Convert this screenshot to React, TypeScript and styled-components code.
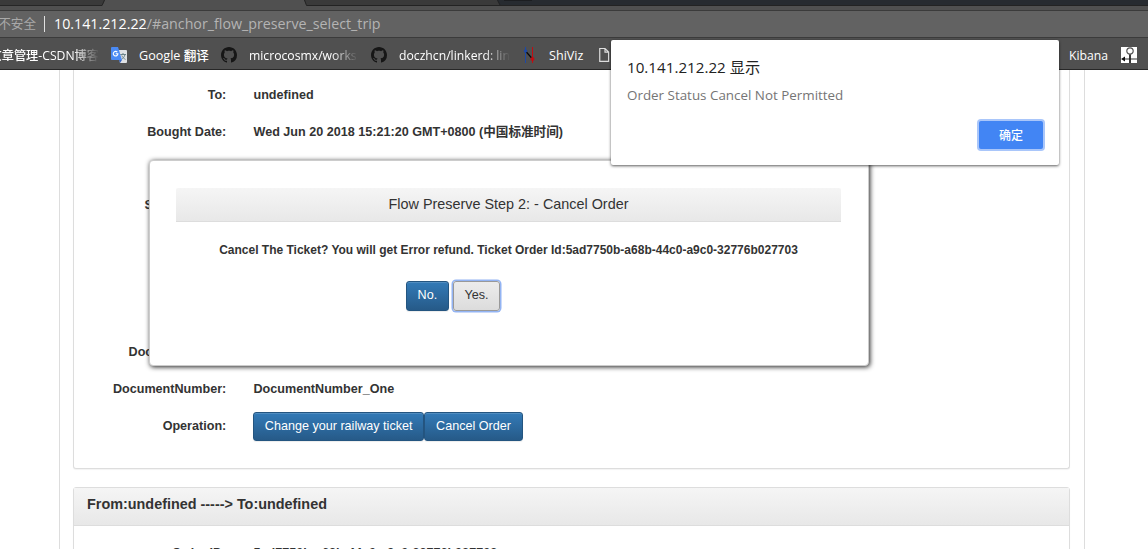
import React from 'react';
import styled, { createGlobalStyle } from 'styled-components';

const uiFont = '"Open Sans", "Noto Sans CJK SC", sans-serif';
const pageFont = '"Liberation Sans", "Noto Sans CJK SC", sans-serif';

const GlobalStyle = createGlobalStyle`
  *, *::before, *::after { box-sizing: border-box; }
  html, body { margin: 0; padding: 0; }
  body { background: #fff; overflow: hidden; }
`;

const Window = styled.div`
  position: relative;
  display: flex;
  flex-direction: column;
  width: 1148px;
  height: 549px;
  overflow: hidden;
  background: #fff;
`;

/* Browser chrome */

const Chrome = styled.header`
  flex: none;
  height: 70px;
  display: flex;
  flex-direction: column;
  background: #505050;
  border-bottom: 1px solid #272727;
`;

const TabStrip = styled.svg`
  display: block;
  flex: none;
  width: 1148px;
  height: 10px;
`;

const AddressBar = styled.div`
  flex: none;
  height: 28px;
  display: flex;
  align-items: center;
  background: #626262;
  border-top: 1px solid #3b3b3b;
  border-bottom: 1px solid #3b3b3b;
  font: 14.25px/20px ${uiFont};
  color: #b4b4b4;
  white-space: nowrap;
`;

const Security = styled.span`
  width: 36px;
  display: flex;
  justify-content: flex-end;
  font-size: 12.6px;
  color: #a9a9a9;
`;

const Separator = styled.span`
  width: 1px;
  height: 16px;
  margin: 0 9px 0 8px;
  background: #e0e0e0;
`;

const Host = styled.span`
  color: #fff;
`;

const Bookmarks = styled.nav`
  flex: 1;
  display: flex;
  align-items: center;
  padding-top: 3px;
  font: 500 12.2px/18px ${uiFont};
  color: #fff;
  white-space: nowrap;
`;

const Bookmark = styled.div<{ $gap?: number; $width: number }>`
  flex: none;
  display: flex;
  align-items: center;
  width: ${p => p.$width}px;
  margin-left: ${p => p.$gap ?? 0}px;
  gap: 12px;
`;

const BookmarkLabel = styled.span<{ $fade?: boolean; $size?: number; $end?: boolean }>`
  flex: 1;
  min-width: 0;
  display: flex;
  justify-content: ${p => (p.$end ? 'flex-end' : 'flex-start')};
  overflow: hidden;
  padding-top: 1px;
  font-size: ${p => p.$size ?? 12.2}px;
  ${p => p.$fade && 'mask-image: linear-gradient(to left, transparent 0, #000 26px);'}
`;

const Icon = styled.svg`
  display: block;
  flex: none;
`;

/* Page */

const Page = styled.main`
  flex: 1;
  min-height: 0;
  width: 1026px;
  margin-left: 59px;
  padding: 0 14px 0 13px;
  border: 1px solid #ddd;
  border-width: 0 1px;
  overflow: hidden;
  color: #333;
  font: 14.4px/22px ${pageFont};
`;

const OrderPanel = styled.section<{ $continued?: boolean }>`
  border: 1px solid #ddd;
  background: #fff;
  box-shadow: 0 1px 1px rgba(0, 0, 0, 0.05);
  ${p =>
    p.$continued
      ? 'height: 399px; border-top: 0; border-radius: 0 0 3px 3px; padding-top: 6.4px;'
      : 'height: 120px; margin-top: 18px; border-radius: 3px 3px 0 0;'}
`;

const PanelTitle = styled.h3`
  margin: 0 0 9px;
  height: 38px;
  padding: 5px 13px;
  font-size: 14.4px;
  line-height: 22px;
  font-weight: bold;
  background: linear-gradient(#f5f5f5, #e8e8e8);
  border-bottom: 1px solid #ddd;
`;

const Field = styled.div`
  display: flex;
  align-items: center;
  height: 36.8px;
  font-size: 12.6px;
  font-weight: bold;
  white-space: nowrap;
`;

const FieldLabel = styled.span`
  width: 152.3px;
  text-align: right;
`;

const FieldValue = styled.div<{ $actions?: boolean }>`
  display: flex;
  margin-left: ${p => (p.$actions ? 26.7 : 27.2)}px;
  padding-top: ${p => (p.$actions ? 1.2 : 0)}px;
`;

const Button = styled.button<{ $plain?: boolean }>`
  height: ${p => (p.$plain ? 30 : 29)}px;
  padding: 0 10.8px 2px;
  border: 1px solid ${p => (p.$plain ? '#999' : '#245580')};
  border-radius: 3px;
  background: ${p =>
    p.$plain ? 'linear-gradient(#ececec, #dcdcdc)' : 'linear-gradient(#337ab7, #265a88)'};
  box-shadow: ${p =>
    p.$plain ? '0 0 0 1.5px #93b4f3' : 'inset 0 1px 0 rgba(255,255,255,.15), 0 1px 1px rgba(0,0,0,.075)'};
  color: ${p => (p.$plain ? '#333' : '#fff')};
  font: 12.6px/20px ${pageFont};
`;

/* In-page modal */

const Modal = styled.section`
  position: absolute;
  left: 149px;
  top: 160px;
  width: 720px;
  height: 206px;
  padding: 27px 27px 0 26px;
  border: 1px solid #ccc;
  border-radius: 4px;
  background: #fff;
  box-shadow: 1px 1px 5px #222;
  color: #333;
  font-family: ${pageFont};
`;

const ModalTitle = styled.h2`
  margin: 0;
  height: 34px;
  border-bottom: 1px solid #ddd;
  border-radius: 2px 2px 0 0;
  background: linear-gradient(#f5f5f5, #e8e8e8);
  font-size: 14.4px;
  line-height: 33px;
  font-weight: normal;
  text-align: center;
`;

const ModalText = styled.p`
  margin: 18px 0 0;
  font-size: 12px;
  line-height: 20px;
  font-weight: bold;
  text-align: center;
  white-space: nowrap;
`;

const ModalActions = styled.div`
  display: flex;
  align-items: flex-start;
  gap: 4px;
  margin: 21px 0 0 230px;

  ${Button} {
    padding: 0 10.6px 3px;
    height: 30px;
  }
`;

/* Native alert */

const Alert = styled.section`
  position: absolute;
  left: 611px;
  top: 40px;
  width: 448px;
  height: 125px;
  padding: 16px 16px 0;
  border-radius: 2px;
  background: #fff;
  box-shadow: 0 1px 3px rgba(0, 0, 0, 0.65);
  display: flex;
  flex-direction: column;
  font-family: ${uiFont};
`;

const AlertTitle = styled.h1`
  margin: 0;
  font-size: 15.2px;
  line-height: 22px;
  font-weight: normal;
  color: #222;
`;

const AlertText = styled.p`
  margin: 7px 0 0;
  font-size: 13.4px;
  line-height: 20px;
  color: #757575;
`;

const AlertButton = styled.button`
  align-self: flex-end;
  width: 64px;
  height: 28px;
  margin-top: 16px;
  padding: 1px 0 0;
  border: 0;
  border-radius: 2px;
  background: #4285f4;
  box-shadow: 0 0 0 2px #a9c6fa;
  color: #fff;
  font: 500 12px/27px ${uiFont};
`;

const TabShapes = () => (
  <TabStrip viewBox="0 0 1148 10">
    <path d="M0 0H105L102.5 5.5H0Z" fill="#3a3a3a" />
    <path d="M0 5.5H102L104.5 0" fill="none" stroke="#262626" />
    <path d="M304 0H1148V5.5H306.5Z" fill="#3a3a3a" />
    <path d="M497 0H1148V5.5H500Z" fill="#272b30" />
    <path d="M304.500 0L306.500 5.500H1148M497.500 0L500 5" fill="none" stroke="#232323" />
    <path d="M504 0H532" stroke="#1c1e21" strokeWidth="2" />
  </TabStrip>
);

const GithubIcon = () => (
  <Icon width="16" height="16" viewBox="0 0 16 16">
    <path
      fill="#161616"
      d="M8 0C3.58 0 0 3.58 0 8c0 3.54 2.29 6.53 5.47 7.59.4.07.55-.17.55-.38 0-.19-.01-.82-.01-1.49-2.01.37-2.53-.49-2.69-.94-.09-.23-.48-.94-.82-1.13-.28-.15-.68-.52-.01-.53.63-.01 1.08.58 1.23.82.72 1.21 1.87.87 2.33.66.07-.52.28-.87.51-1.07-1.78-.2-3.64-.89-3.64-3.95 0-.87.31-1.59.82-2.15-.08-.2-.36-1.02.08-2.12 0 0 .67-.21 2.2.82.64-.18 1.32-.27 2-.27s1.36.09 2 .27c1.53-1.04 2.2-.82 2.2-.82.44 1.1.16 1.92.08 2.12.51.56.82 1.27.82 2.15 0 3.07-1.87 3.75-3.65 3.95.29.25.54.73.54 1.48 0 1.07-.01 1.93-.01 2.2 0 .21.15.46.55.38A8.01 8.01 0 0 0 16 8c0-4.42-3.58-8-8-8Z"
    />
  </Icon>
);

const TranslateIcon = () => (
  <Icon width="16" height="16" viewBox="0 0 16 16">
    <path d="M6 3H15a1 1 0 0 1 1 1V15a1 1 0 0 1-1 1H9Z" fill="#dfe1e4" />
    <path d="M9.200 7.500H15M12 6V7.500M14 7.500C13.400 10 12 11.500 10.300 12.500M10.800 8.500C11.500 10.300 12.800 11.500 14.500 12.400" stroke="#6d8489" strokeWidth="1" fill="none" />
    <path d="M8 13H11L9 16Z" fill="#3767c4" />
    <path d="M1 0H7L11 13H1a1 1 0 0 1-1-1V1A1 1 0 0 1 1 0Z" fill="#4a8af4" />
    <path d="M6.300 5.100A2.300 2.300 0 1 0 6.900 6.700H4.700" stroke="#fff" strokeWidth="1.100" fill="none" />
  </Icon>
);

const ShiVizIcon = () => (
  <Icon width="14" height="16" viewBox="0 0 14 16">
    <path d="M2.500 0V16" stroke="#1d49a6" />
    <path d="M9.500 0V16" stroke="#c00d12" />
    <path d="M2.500 4L9.500 12" stroke="#080808" strokeWidth="1.200" />
    <circle cx="2.500" cy="4" r="1.700" fill="#1d49a6" />
    <circle cx="9.500" cy="12" r="1.900" fill="#c00d12" />
  </Icon>
);

const FileIcon = () => (
  <Icon width="11" height="16" viewBox="0 0 11 16">
    <path d="M.750 1.500H6L9.600 5V14.400H.750ZM6 1.500V5.200H9.600" fill="none" stroke="#dedede" strokeWidth="1.200" />
  </Icon>
);

const PinIcon = () => (
  <Icon width="16" height="16" viewBox="0 0 16 16">
    <path d="M0 0H16V16H0Z" fill="#fff" />
    <path d="M2 12H16" stroke="#777" strokeWidth="1.500" />
    <path d="M0 12L4 9.500V14.500Z" fill="#111" />
    <path d="M9 7V16" stroke="#222" strokeWidth="1.800" />
    <circle cx="9" cy="4" r="3.200" fill="#fff" stroke="#555" strokeWidth="1.200" />
  </Icon>
);

export default function App() {
  return (
    <Window>
      <GlobalStyle />
      <Chrome>
        <TabShapes />
        <AddressBar>
          <Security>不安全</Security>
          <Separator />
          <Host>10.141.212.22</Host>
          <span>/#anchor_flow_preserve_select_trip</span>
        </AddressBar>
        <Bookmarks>
          <Bookmark $width={99}>
            <BookmarkLabel $fade $end>文章管理-CSDN博客</BookmarkLabel>
          </Bookmark>
          <Bookmark $gap={12} $width={98}>
            <TranslateIcon />
            <BookmarkLabel $size={12.6}>Google 翻译</BookmarkLabel>
          </Bookmark>
          <Bookmark $gap={12} $width={137}>
            <GithubIcon />
            <BookmarkLabel $fade>microcosmx/works</BookmarkLabel>
          </Bookmark>
          <Bookmark $gap={13} $width={139}>
            <GithubIcon />
            <BookmarkLabel $fade>doczhcn/linkerd: lin</BookmarkLabel>
          </Bookmark>
          <Bookmark $gap={13} $width={63}>
            <ShiVizIcon />
            <BookmarkLabel $size={12.6}>ShiViz</BookmarkLabel>
          </Bookmark>
          <Bookmark $gap={13} $width={11}>
            <FileIcon />
          </Bookmark>
          <Bookmark $gap={459} $width={40}>
            <BookmarkLabel>Kibana</BookmarkLabel>
          </Bookmark>
          <Bookmark $gap={12} $width={16}>
            <PinIcon />
          </Bookmark>
        </Bookmarks>
      </Chrome>

      <Page>
        <OrderPanel $continued>
          <Field>
            <FieldLabel>To:</FieldLabel>
            <FieldValue>undefined</FieldValue>
          </Field>
          <Field>
            <FieldLabel>Bought Date:</FieldLabel>
            <FieldValue>Wed Jun 20 2018 15:21:20 GMT+0800 (中国标准时间)</FieldValue>
          </Field>
          <Field />
          <Field>
            <FieldLabel>Seat Number:</FieldLabel>
          </Field>
          <Field />
          <Field />
          <Field />
          <Field>
            <FieldLabel>Document Type:</FieldLabel>
          </Field>
          <Field>
            <FieldLabel>DocumentNumber:</FieldLabel>
            <FieldValue>DocumentNumber_One</FieldValue>
          </Field>
          <Field>
            <FieldLabel>Operation:</FieldLabel>
            <FieldValue $actions>
              <Button>Change your railway ticket</Button>
              <Button>Cancel Order</Button>
            </FieldValue>
          </Field>
        </OrderPanel>
        <OrderPanel>
          <PanelTitle>From:undefined -----&gt; To:undefined</PanelTitle>
          <Field>
            <FieldLabel>Order ID:</FieldLabel>
            <FieldValue>5ad7750b-a68b-44c0-a9c0-32776b027703</FieldValue>
          </Field>
        </OrderPanel>
      </Page>

      <Modal>
        <ModalTitle>Flow Preserve Step 2: - Cancel Order</ModalTitle>
        <ModalText>
          Cancel The Ticket? You will get Error refund. Ticket Order Id:5ad7750b-a68b-44c0-a9c0-32776b027703
        </ModalText>
        <ModalActions>
          <Button>No.</Button>
          <Button $plain>Yes.</Button>
        </ModalActions>
      </Modal>

      <Alert>
        <AlertTitle>10.141.212.22 显示</AlertTitle>
        <AlertText>Order Status Cancel Not Permitted</AlertText>
        <AlertButton>确定</AlertButton>
      </Alert>
    </Window>
  );
}
